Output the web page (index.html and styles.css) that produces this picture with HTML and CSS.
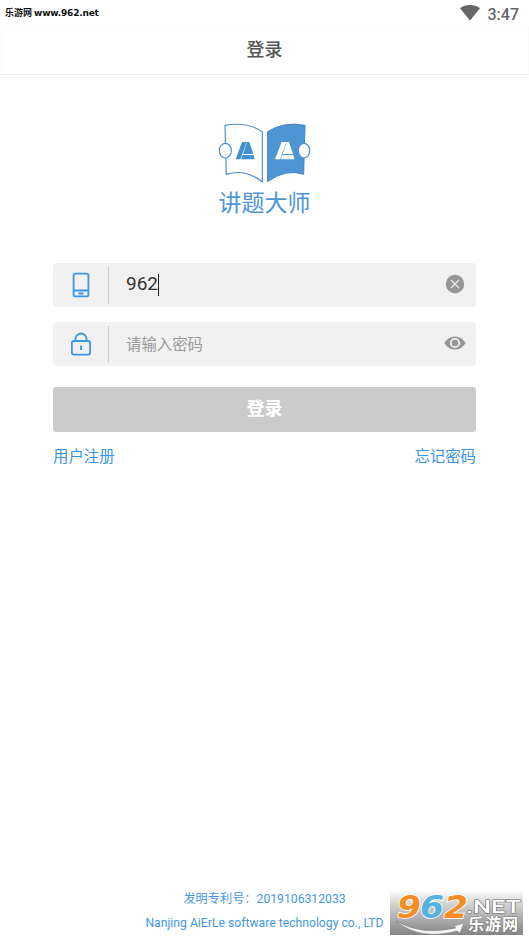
FILE: index.html
```html
<!DOCTYPE html>
<html lang="zh-CN">
<head>
<meta charset="utf-8">
<title>登录</title>
<link rel="stylesheet" href="styles.css">
</head>
<body>
<div class="status">
  <span class="site">乐游网 <span class="site-url">www.962.net</span></span>
  <span class="status-right">
    <svg class="wifi" viewBox="0 0 20 16"><path d="M0 3.3C5.5-1 14.5-1 20 3.3L10 15.6z"/></svg>
    <span class="time">3:47</span>
  </span>
</div>
<header class="header"><h1>登录</h1></header>
<main class="main">
  <div class="brand">
    <svg class="book" viewBox="0 0 330 215">
      <g fill="#fff" stroke="#4b8fd0" stroke-width="3.5">
        <path d="M45 31Q110 19 157 50V200Q103 160 49 178Z"/>
        <ellipse cx="46" cy="107" rx="18" ry="22"/>
      </g>
      <path d="M173 50Q220 19 285 31L281 178Q227 160 173 200Z" fill="#4e96d3" stroke="#467fc0" stroke-width="3"/>
      <ellipse cx="282" cy="107" rx="17" ry="22" fill="#fff" stroke="#4b8fd0" stroke-width="3.5"/>
      <path fill="#4290d1" d="M96 81H110L91 133H77ZM111 81H118L130 117H99ZM97 120H131L134 133H93Z"/>
      <path fill="#fff" d="M215 81H229L210 133H195ZM230 81H237L249 117H218ZM216 120H250L253 133H212Z"/>
    </svg>
    <div class="brand-name">讲题大师</div>
  </div>
  <div class="field">
    <span class="lead"><svg class="phone" viewBox="0 0 18 26"><rect x="1.6" y="1.6" width="14.8" height="22.8" rx="1.5"/><path d="M2 18.5H16M6.5 21.5H11.5"/></svg></span>
    <span class="value">962<i class="caret"></i></span>
    <svg class="clear" viewBox="0 0 20 20"><circle cx="10" cy="10" r="9.2" fill="#969696"/><path d="M6 6L14 14M14 6L6 14" stroke="#eee" stroke-width="1.1"/></svg>
  </div>
  <div class="field">
    <span class="lead"><svg class="lock" viewBox="0 0 20 24"><rect x=".9" y="9" width="18.2" height="13.6" rx="2"/><path d="M4.5 9V7a5.5 5.5 0 0 1 11 0V9M10 13.5V18"/></svg></span>
    <span class="value placeholder">请输入密码</span>
    <svg class="eye" viewBox="0 0 22 14"><path d="M.3 7C3 2.7 6.5.4 11 .4S19 2.7 21.7 7C19 11.3 15.5 13.6 11 13.6S3 11.3.3 7z" fill="#969696"/><circle cx="11" cy="7" r="4.2" fill="#969696" stroke="#f1f1f1" stroke-width="1.8"/></svg>
  </div>
  <button class="submit">登录</button>
  <div class="links"><a>用户注册</a><a>忘记密码</a></div>
</main>
<footer class="footer">
  <div>发明专利号：2019106312033</div>
  <div>Nanjing AiErLe software technology co., LTD</div>
</footer>
<svg class="stamp" viewBox="0 -10 139 61">
  <defs><linearGradient id="shade" x2="0" y2="1"><stop stop-color="#fff"/><stop offset=".3" stop-color="#d4d4d4"/><stop offset="1" stop-color="#858585"/></linearGradient></defs>
  <rect width="133" height="45" fill="url(#shade)"/>
  <path d="M6 31Q31 46 66 38L64 36L74 33L70 43L67 41Q30 51 6 31Z" fill="#f4f4f4" stroke="#777" stroke-width=".5"/>
  <g class="digits"><text x="7" y="28" textLength="24" lengthAdjust="spacingAndGlyphs" fill="#f58d26">9</text><text x="30" y="28" textLength="24" lengthAdjust="spacingAndGlyphs" fill="#55b1e1">6</text><text x="54" y="28" textLength="24" lengthAdjust="spacingAndGlyphs" fill="#f58d26">2</text></g>
  <text class="net" x="76" y="23" textLength="55" lengthAdjust="spacingAndGlyphs">.NET</text>
  <text class="cn" x="78" y="40" textLength="50">乐游网</text>
</svg>
</body>
</html>
```
FILE: styles.css
```css
* { box-sizing: border-box; }
body {
  margin: 0;
  width: 529px;
  height: 941px;
  overflow: hidden;
  position: relative;
  display: flex;
  flex-direction: column;
  background: #fff;
  font-family: Roboto, "Noto Sans CJK SC", sans-serif;
}
.status {
  height: 27px;
  padding: 0 10px 0 5px;
  display: flex;
  justify-content: space-between;
}
.site {
  font: bold 9px/26px "Noto Sans CJK SC", sans-serif;
  color: #111;
}
.site-url { font-family: "DejaVu Sans", sans-serif; font-size: 9px; letter-spacing: -.2px; }
.status-right { display: flex; gap: 8px; }
.wifi { width: 20px; height: 16px; margin-top: 5px; fill: #666; }
.time { font-size: 16px; line-height: 29px; font-weight: 500; color: #666; }
.header {
  height: 48px;
  border: 1px solid #fafafa;
  border-bottom-color: #eee;
}
.header h1 {
  margin: 0;
  text-align: center;
  font-size: 18px;
  line-height: 43px;
  font-weight: 500;
  color: #555;
}
.main {
  flex: 1;
  padding: 40px 53px 0;
  display: flex;
  flex-direction: column;
}
.brand { height: 148px; display: flex; flex-direction: column; align-items: center; }
.book { width: 110px; height: 71.67px; flex: none; }
.brand-name { font-size: 23px; line-height: 34px; color: #4e96d3; }
.field {
  height: 44px;
  flex: none;
  margin-bottom: 15px;
  padding-right: 10px;
  display: flex;
  align-items: center;
  border-radius: 4px;
  background: #f1f1f1;
}
.lead {
  width: 56px;
  height: 37px;
  display: flex;
  align-items: center;
  justify-content: center;
  border-right: 1px solid #ccc;
}
.lead svg { fill: none; stroke: #3c96e8; stroke-width: 1.8; }
.phone { width: 18px; height: 26px; }
.lock { width: 20px; height: 24px; }
.value {
  flex: 1;
  padding: 0 0 3px 17px;
  display: flex;
  align-items: center;
  font-size: 19px;
  color: #333;
}
.placeholder { font-size: 15.4px; color: #999; padding-bottom: 2px; }
.caret { width: 1px; height: 22px; background: #222; margin-bottom: -3px; }
.clear { width: 20px; height: 20px; margin: 0 1px 2px 0; }
.eye { width: 22px; height: 14px; margin-bottom: 2px; }
.submit {
  height: 45px;
  margin: 6px 0 0;
  padding: 0 0 6px;
  border: 0;
  border-radius: 3px;
  background: #cbcbcb;
  color: #fff;
  font: bold 18px "Noto Sans CJK SC", sans-serif;
}
.links {
  margin-top: 13px;
  display: flex;
  justify-content: space-between;
  font-size: 15.4px;
  line-height: 24px;
  color: #3795e3;
}
.footer {
  height: 54px;
  text-align: center;
  font-size: 12.2px;
  line-height: 24px;
  color: #4798e4;
}
.stamp { position: absolute; left: 390px; top: 880px; width: 139px; height: 61px; }
.digits { font: italic bold 32px "DejaVu Sans", sans-serif; stroke: #fff; stroke-width: 1.5px; paint-order: stroke; }
.net { font: 500 18px Roboto, sans-serif; fill: #fff; stroke: #666; stroke-width: 1px; paint-order: stroke; }
.cn { font: bold 16px "Noto Sans CJK SC", sans-serif; fill: #fff; stroke: #777; stroke-width: 1px; paint-order: stroke; }
```
